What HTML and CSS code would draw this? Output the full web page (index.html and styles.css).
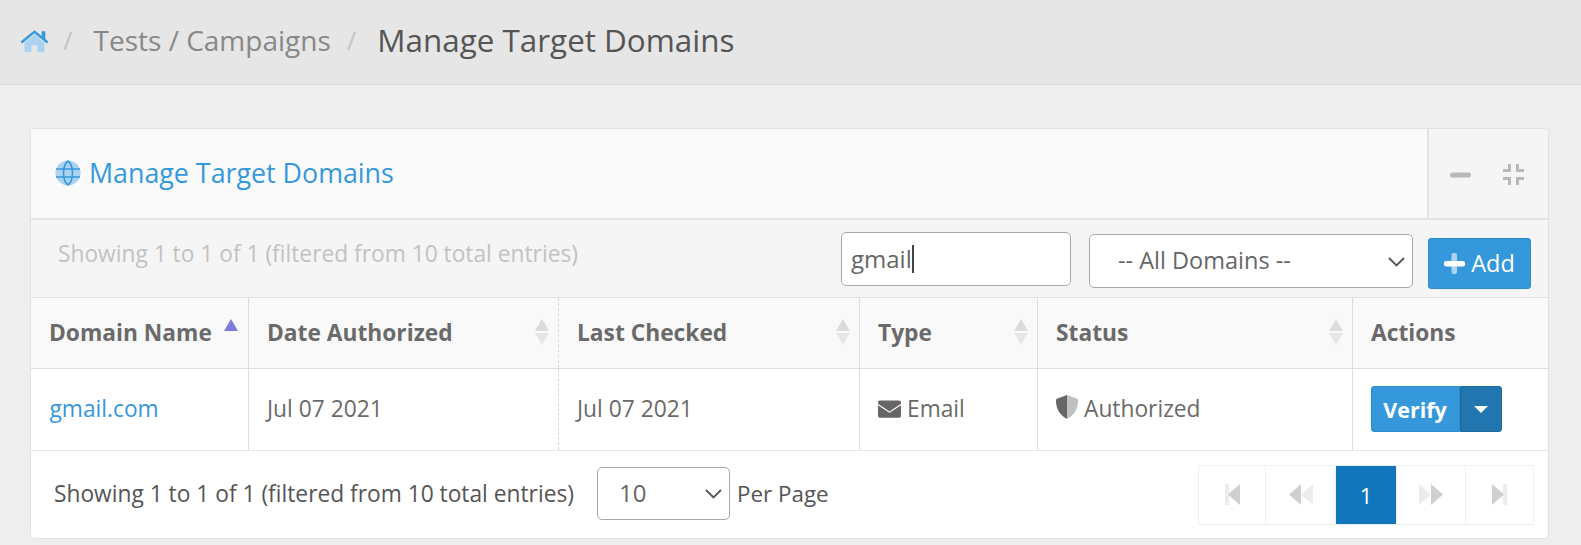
FILE: index.html
```html
<!DOCTYPE html>
<html lang="en">
<head>
<meta charset="utf-8">
<title>Manage Target Domains</title>
<link rel="stylesheet" href="styles.css">
</head>
<body>
<nav class="crumbs">
  <a class="home" href="#" aria-label="Home">
    <svg width="29" height="24" viewBox="0 0 29 24"><path class="duo-light" d="M14.5 5.2 4.6 13.4V22a1.3 1.3 0 0 0 1.3 1.3h5.6v-7h6v7h5.6a1.3 1.3 0 0 0 1.3-1.3v-8.6z"/><path class="duo-solid" d="M.6 12.6 14.5 1.2l7.2 5.9V2.2h3.6v7.8l3.1 2.6-1.5 1.9L14.5 4.3 2.1 14.5z"/></svg>
  </a>
  <span class="sep">/</span>
  <a class="crumb" href="#">Tests / Campaigns</a>
  <span class="sep sep-last">/</span>
  <h1 class="page-title">Manage Target Domains</h1>
</nav>
<main class="content">
  <section class="card">
    <header class="card-head">
      <h2 class="card-title">
        <svg width="26" height="26" viewBox="0 0 26 26"><circle class="duo-light" cx="13" cy="13" r="12.5"/><path class="globe-lines" d="M1 9h24M1 17h24M13 .8C7 6 7 20 13 25.2M13 .8c6 5.2 6 19.2 0 24.4"/></svg>
        <span>Manage Target Domains</span>
      </h2>
      <div class="card-tools">
        <svg width="21" height="6" viewBox="0 0 21 6"><rect y=".5" width="21" height="5" rx="2.5" fill="#b9b9b9"/></svg>
        <svg width="21" height="21" viewBox="0 0 21 21"><path class="compress" d="M6.500 0v6.500H0M14.500 0v6.500H21M6.500 21v-6.500H0M14.500 21v-6.500H21"/></svg>
      </div>
    </header>
    <div class="toolbar">
      <p class="info-muted">Showing 1 to 1 of 1 (filtered from 10 total entries)</p>
      <div class="search"><span>gmail</span><i class="caret"></i></div>
      <div class="select-wrap domain-wrap">
        <select class="domain-select"><option>-- All Domains --</option></select>
        <svg class="chevron" width="17" height="10" viewBox="0 0 17 10"><path d="M1 1l7.500 7.500L16 1"/></svg>
      </div>
      <button class="btn-add" type="button">
        <svg width="21" height="21" viewBox="0 0 21 21"><rect x="7.500" width="5.500" height="21" rx="2" fill="#a9d3f1"/><rect y="8" width="21" height="5.500" rx="2" fill="#fff"/></svg>
        Add
      </button>
    </div>
    <table class="grid">
      <colgroup>
        <col class="c1"><col class="c2"><col class="c3"><col class="c4"><col class="c5"><col class="c6">
      </colgroup>
      <thead>
        <tr>
          <th class="sorted">Domain Name<i class="arrow-up active"></i></th>
          <th class="dashed">Date Authorized<span class="sort"><i class="arrow-up"></i><i class="arrow-down"></i></span></th>
          <th>Last Checked<span class="sort"><i class="arrow-up"></i><i class="arrow-down"></i></span></th>
          <th>Type<span class="sort"><i class="arrow-up"></i><i class="arrow-down"></i></span></th>
          <th>Status<span class="sort"><i class="arrow-up"></i><i class="arrow-down"></i></span></th>
          <th>Actions</th>
        </tr>
      </thead>
      <tbody>
        <tr>
          <td><a class="link" href="#">gmail.com</a></td>
          <td class="dashed">Jul 07 2021</td>
          <td>Jul 07 2021</td>
          <td><svg class="ico mail" width="23" height="18" viewBox="0 0 24 18"><path fill="#666" d="M2 0h20a2 2 0 0 1 2 2v1.500l-12 8-12-8V2a2 2 0 0 1 2-2zM0 5l12 8 12-8v11a2 2 0 0 1-2 2H2a2 2 0 0 1-2-2z"/></svg>Email</td>
          <td><svg class="ico" width="22" height="24" viewBox="0 0 22 24"><path fill="#666" d="M11 0 1.500 3.500C.500 3.900 0 4.600 0 5.500 0 14 4 20.500 11 24z"/><path fill="#c0c0c0" d="m11 0 9.500 3.500c1 .400 1.500 1.100 1.500 2C22 14 18 20.500 11 24z"/></svg>Authorized</td>
          <td class="action-cell">
            <div class="split">
              <button class="split-main" type="button">Verify</button>
              <button class="split-caret" type="button" aria-label="More"><i></i></button>
            </div>
          </td>
        </tr>
      </tbody>
    </table>
    <footer class="card-foot">
      <span class="info">Showing 1 to 1 of 1 (filtered from 10 total entries)</span>
      <div class="select-wrap size-wrap">
        <select class="size-select"><option>10</option></select>
        <svg class="chevron" width="17" height="10" viewBox="0 0 17 10"><path d="M1 1l7.500 7.500L16 1"/></svg>
      </div>
      <span class="per-page">Per Page</span>
      <ul class="pager">
        <li class="p1"><svg width="15" height="21" viewBox="0 0 15 21"><rect width="4" height="21" fill="#ececec"/><path fill="#cfcfcf" d="M15 0v21L3 10.500z"/></svg></li>
        <li class="p2"><svg width="24" height="21" viewBox="0 0 24 21"><path fill="#cfcfcf" d="M12 0v21L0 10.500z"/><path fill="#ececec" d="M24 0v21L12 10.500z"/></svg></li>
        <li class="p3">1</li>
        <li class="p4"><svg width="24" height="21" viewBox="0 0 24 21"><path fill="#ececec" d="M0 0v21l12-10.500z"/><path fill="#cfcfcf" d="M12 0v21l12-10.500z"/></svg></li>
        <li class="p5"><svg width="15" height="21" viewBox="0 0 15 21"><rect x="11" width="4" height="21" fill="#ececec"/><path fill="#cfcfcf" d="M0 0v21l12-10.500z"/></svg></li>
      </ul>
    </footer>
  </section>
</main>
</body>
</html>
```
FILE: styles.css
```css
* { box-sizing: border-box; }
html, body { height: 100%; }
body {
  margin: 0;
  background: #eeeeee;
  font-family: "Open Sans", "Liberation Sans", sans-serif;
  color: #666;
  overflow: hidden;
}
a { text-decoration: none; }
h1, h2, p, ul { margin: 0; padding: 0; }

.duo-light { fill: #a9d3f1; }
.duo-solid { fill: #3498db; }

.crumbs {
  height: 85px;
  padding: 0 0 4px 20px;
  display: flex;
  align-items: center;
  background: #e6e6e6;
  border-bottom: 1px solid #dcdcdc;
}
.home { display: flex; margin-top: 2px; }
.sep { color: #c4c4c4; font-size: 26px; margin-left: 14px; }
.crumb { color: #888; font-size: 28px; margin-left: 21px; }
.sep-last { margin-left: 16px; }
.page-title { color: #555; font-size: 31.400px; font-weight: 400; margin: 0 0 2px 21px; }

.content { padding: 43px 32px 0 30px; }
.card {
  background: #fff;
  border: 1px solid #e2e2e2;
  border-radius: 5px;
  overflow: hidden;
}
.card-head {
  height: 91px;
  display: flex;
  background: #fafafa;
  border-bottom: 2px solid #e3e3e3;
}
.card-title {
  flex: 1;
  display: flex;
  align-items: center;
  gap: 8px;
  padding: 0 0 2px 24px;
  color: #3498db;
  font-size: 26.800px;
  font-weight: 400;
}
.card-tools {
  width: 121px;
  display: flex;
  align-items: center;
  justify-content: center;
  gap: 32px;
  padding: 2px 3px 0 0;
  background: #f5f5f5;
  border-left: 2px solid #e3e3e3;
}
.globe-lines { fill: none; stroke: #3498db; stroke-width: 1.600; }
.compress { fill: none; stroke: #b9b9b9; stroke-width: 3; }

.toolbar {
  height: 78px;
  display: flex;
  align-items: center;
  background: #f5f5f5;
  border-bottom: 1px solid #e2e2e2;
  padding-right: 17px;
}
.info-muted {
  flex: 1;
  padding-left: 27px;
  margin-bottom: 11px;
  color: #c2c2c2;
  font-size: 22.750px;
}
.search {
  width: 230px;
  height: 54px;
  padding-left: 9px;
  display: flex;
  align-items: center;
  background: #fff;
  border: 1px solid #a8a8a8;
  border-radius: 5px;
  font-size: 24px;
  color: #666;
}
.caret { width: 2px; height: 28px; background: #444; }
.select-wrap { position: relative; display: flex; }
.chevron {
  position: absolute;
  top: 50%;
  right: 8px;
  margin-top: -4px;
  pointer-events: none;
}
.chevron path { fill: none; stroke: #555; stroke-width: 1.800; }
.domain-wrap { margin: 5px 15px 0 18px; }
.domain-select {
  width: 324px;
  height: 54px;
  padding: 0 0 2px 28px;
  appearance: none;
  background: #fff;
  border: 1px solid #a8a8a8;
  border-radius: 5px;
  font: 400 23.500px "Open Sans", sans-serif;
  color: #666;
}
.btn-add {
  width: 103px;
  height: 51px;
  margin-top: 9px;
  display: flex;
  align-items: center;
  justify-content: center;
  gap: 6px;
  background: #3498db;
  border: 1px solid #2f8cca;
  border-radius: 3px;
  color: #fff;
  font: 400 23.500px "Open Sans", sans-serif;
}

.grid {
  width: 100%;
  table-layout: fixed;
  border-collapse: collapse;
}
.c1 { width: 217px; }
.c2 { width: 310px; }
.c3 { width: 301px; }
.c4 { width: 178px; }
.c5 { width: 315px; }
.grid th {
  height: 70px;
  position: relative;
  padding: 0 0 0 18px;
  background: #f9f9f9;
  border-bottom: 1px solid #dedede;
  border-right: 1px solid #dedede;
  text-align: left;
  font-size: 22.750px;
  font-weight: 700;
  color: #6a6a6a;
}
.grid th + th { padding-left: 18.500px; }
.grid td {
  height: 82px;
  padding: 0 0 2px 18.500px;
  border-bottom: 1px solid #e6e6e6;
  border-right: 1px solid #dedede;
  font-size: 22.750px;
  color: #6a6a6a;
}
.grid th:last-child, .grid td:last-child { border-right: 0; }
.grid .dashed { border-right: 1px dashed #d8d8d8; }
.grid .action-cell { padding-left: 18px; }
.link { color: #3498db; }
.ico { margin-right: 6px; vertical-align: -2px; }
.ico.mail { vertical-align: -1px; }

.sort {
  position: absolute;
  top: 21px;
  right: 9px;
  display: flex;
  flex-direction: column;
  gap: 2px;
}
.arrow-up, .arrow-down {
  display: block;
  width: 0;
  height: 0;
  border-left: 7px solid transparent;
  border-right: 7px solid transparent;
}
.arrow-up { border-bottom: 12px solid #dcdcdc; }
.arrow-down { border-top: 12px solid #e6e6e6; }
.arrow-up.active {
  position: absolute;
  top: 21px;
  right: 10px;
  border-bottom-color: #7b7bdc;
}

.split { display: flex; width: 131px; height: 46px; margin-top: 2px; }
.split-main {
  width: 89px;
  background: #3498db;
  border: 1px solid #2f8cca;
  border-radius: 3px 0 0 3px;
  color: #fff;
  font: 700 21.500px "Open Sans", sans-serif;
  padding: 0;
}
.split-caret {
  width: 42px;
  display: flex;
  align-items: center;
  justify-content: center;
  background: #2176b0;
  border: 1px solid #1c6a9f;
  border-radius: 0 3px 3px 0;
  padding: 0;
}
.split-caret i {
  width: 0;
  height: 0;
  border-left: 7px solid transparent;
  border-right: 7px solid transparent;
  border-top: 7px solid #fff;
}

.card-foot {
  height: 87px;
  display: flex;
  align-items: center;
  padding: 0 14px 2px 23px;
  color: #555;
}
.info { font-size: 22.750px; color: #555; }
.size-wrap { margin: 0 7px 0 23px; }
.size-select {
  width: 133px;
  height: 53px;
  padding: 0 0 2px 21px;
  appearance: none;
  background: #fff;
  border: 1px solid #a8a8a8;
  border-radius: 5px;
  font: 400 24px "Open Sans", sans-serif;
  color: #666;
}
.per-page { flex: 1; font-size: 22.400px; color: #555; }
.pager {
  display: flex;
  height: 60px;
  margin-top: 3px;
  list-style: none;
  border: 1px solid #f0f0f0;
}
.pager li {
  display: flex;
  align-items: center;
  justify-content: center;
  border-right: 1px solid #f0f0f0;
}
.pager li:last-child { border-right: 0; }
.p1 { width: 67px; }
.p2 { width: 70px; }
.p3 { width: 61px; background: #1176bc; color: #fff; font-size: 22px; }
.p4 { width: 69px; }
.p5 { width: 67px; }
```
